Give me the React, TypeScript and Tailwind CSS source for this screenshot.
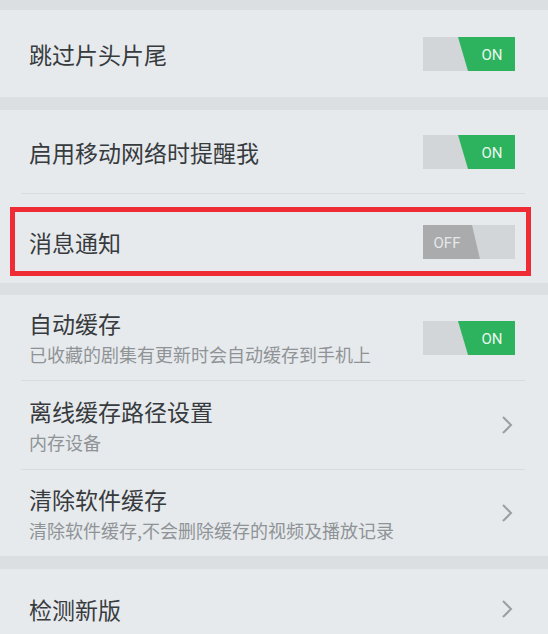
const font = { fontFamily: '"Noto Sans CJK SC", "Noto Sans", sans-serif' };

function Toggle({ on }: { on: boolean }) {
  return (
    <svg width="92" height="34" viewBox="0 0 92 34" className="shrink-0">
      <rect x="0" y="0" width="92" height="34" fill="#d3d6d8" />
      {on ? (
        <>
          <polygon points="35,0 92,0 92,34 45,34" fill="#2db25e" />
          <text x="69" y="23" textAnchor="middle" fontSize="15" fill="#eaf7ee" fontFamily="Roboto, sans-serif">
            ON
          </text>
        </>
      ) : (
        <>
          <polygon points="0,0 49,0 57,34 0,34" fill="#a9abac" />
          <text x="24" y="23" textAnchor="middle" fontSize="15" fill="#e6e7e8" fontFamily="Roboto, sans-serif">
            OFF
          </text>
        </>
      )}
    </svg>
  );
}

function Chevron() {
  return (
    <svg width="12" height="20" viewBox="0 0 12 20" className="shrink-0 mr-[2px]">
      <path d="M2 2 L10 10 L2 18" fill="none" stroke="#9c9fa1" strokeWidth="2" />
    </svg>
  );
}

function Row({
  title,
  sub,
  right,
  h,
}: {
  title: string;
  sub?: string;
  right: React.ReactNode;
  h: string;
}) {
  return (
    <div className={`flex items-center justify-between pl-[29px] pr-[33px] ${h}`}>
      <div className="flex flex-col">
        <span className="text-[23px] leading-[32px] text-[#383b3e]">{title}</span>
        {sub && <span className="text-[18px] leading-[28px] text-[#909396] mt-[1px]">{sub}</span>}
      </div>
      {right}
    </div>
  );
}

function Divider() {
  return <div className="h-px bg-[#d9dde0] ml-[21px] mr-[23px]" />;
}

function Gap({ h }: { h: string }) {
  return <div className={`${h} bg-[#dcdfe2]`} />;
}

export default function App() {
  return (
    <div className="w-[548px] h-[634px] overflow-hidden bg-[#e6eaed]" style={font}>
      <Gap h="h-[10px]" />
      <Row title="跳过片头片尾" right={<Toggle on />} h="h-[87px]" />
      <Gap h="h-[13px]" />
      <Row title="启用移动网络时提醒我" right={<Toggle on />} h="h-[83px]" />
      <Divider />
      <div className="pl-[10px] pr-[17px] pt-[13px] pb-[7px]">
        <div className="flex items-center justify-between h-[69px] border-[5px] border-[#ef2c36] pl-[14px] pr-[11px]">
          <span className="text-[23px] leading-[32px] text-[#383b3e]">消息通知</span>
          <Toggle on={false} />
        </div>
      </div>
      <Gap h="h-[12px]" />
      <Row title="自动缓存" sub="已收藏的剧集有更新时会自动缓存到手机上" right={<Toggle on />} h="h-[85px]" />
      <Divider />
      <Row title="离线缓存路径设置" sub="内存设备" right={<Chevron />} h="h-[88px]" />
      <Divider />
      <Row title="清除软件缓存" sub="清除软件缓存,不会删除缓存的视频及播放记录" right={<Chevron />} h="h-[86px]" />
      <Gap h="h-[13px]" />
      <Row title="检测新版" right={<Chevron />} h="h-[80px]" />
    </div>
  );
}
